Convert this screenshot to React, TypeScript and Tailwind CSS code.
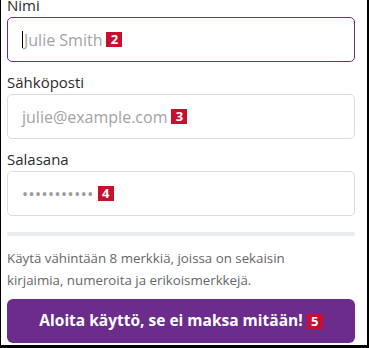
import type { ReactNode } from 'react';

function Badge({ n, className = '' }: { n: number; className?: string }) {
  return (
    <span className={`ml-1 inline-flex h-[15px] w-[16px] items-center justify-center bg-[#c8102e] text-[13px] font-bold leading-none text-white ${className}`}>
      {n}
    </span>
  );
}

function Field({ label, focused, children, className = '' }: { label: string; focused?: boolean; children: ReactNode; className?: string }) {
  return (
    <div className={className}>
      <div className="text-[15px] leading-[22px] text-[#2b2b2b]">{label}</div>
      <div
        className={`mt-[1px] flex h-[45px] items-center rounded-[5px] border bg-white pl-[14px] ${
          focused ? 'border-[#6b2d8f]' : 'border-[#d9dcdf]'
        }`}
      >
        {children}
      </div>
    </div>
  );
}

export default function App() {
  return (
    <div className="h-[348px] w-[369px] overflow-hidden border-b-[3px] border-l border-r-2 border-black bg-white font-['Open_Sans',sans-serif]">
      <div className="w-[348px] pl-[6px] box-content">
        <Field label="Nimi" focused className="-mt-[6px]">
          <span className="mr-[1px] h-[17px] w-px bg-black" />
          <span className="text-[16px] text-[#a3a3a3]">Julie Smith</span>
          <Badge n={2} />
        </Field>
        <Field label="Sähköposti" className="mt-[9px]">
          <span className="text-[16px] text-[#a3a3a3]">julie@example.com</span>
          <Badge n={3} />
        </Field>
        <Field label="Salasana" className="mt-[9px]">
          <span className="text-[16px] tracking-[0.5px] text-[#9a9a9a]">•••••••••••</span>
          <Badge n={4} />
        </Field>
        <div className="mt-[16px] h-[4px] rounded-full bg-[#e9edf0]" />
        <p className="mt-[11px] text-[13.3px] leading-[22px] text-[#666]">
          Käytä vähintään 8 merkkiä, joissa on sekaisin
          <br />
          kirjaimia, numeroita ja erikoismerkkejä.
        </p>
        <button className="mt-[8px] flex h-[44px] w-full items-center justify-center rounded-[6px] bg-[#6b2c8c] text-[15.5px] font-bold text-white">
          Aloita käyttö, se ei maksa mitään!
          <Badge n={5} />
        </button>
      </div>
    </div>
  );
}
